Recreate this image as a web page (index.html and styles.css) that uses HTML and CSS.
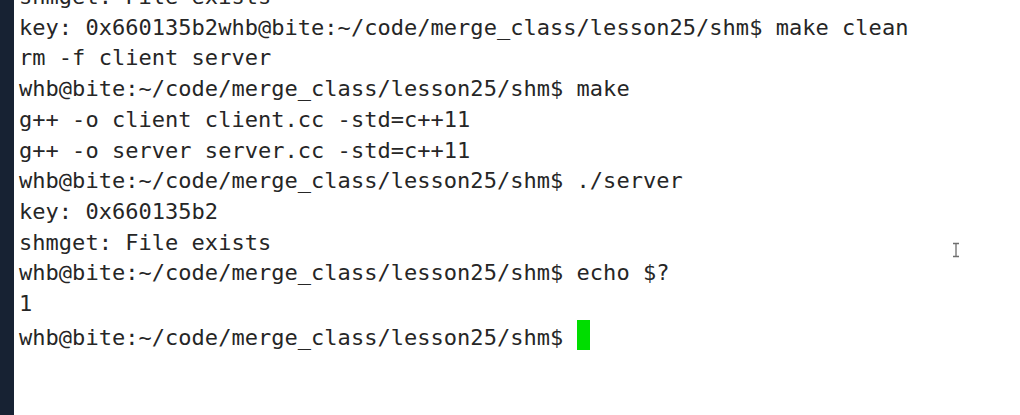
FILE: index.html
```html
<!DOCTYPE html>
<html>
<head>
<meta charset="utf-8">
<link rel="stylesheet" href="styles.css">
</head>
<body>
<div class="window">
  <div class="edge"></div>
  <div class="terminal">
<pre class="output">shmget: File exists
key: 0x660135b2whb@bite:~/code/merge_class/lesson25/shm$ make clean
rm -f client server
whb@bite:~/code/merge_class/lesson25/shm$ make
g++ -o client client.cc -std=c++11
g++ -o server server.cc -std=c++11
whb@bite:~/code/merge_class/lesson25/shm$ ./server
key: 0x660135b2
shmget: File exists
whb@bite:~/code/merge_class/lesson25/shm$ echo $?
1
whb@bite:~/code/merge_class/lesson25/shm$ <span class="cursor"></span></pre>
    <svg class="ibeam" width="10" height="16" viewBox="0 0 10 16">
      <path d="M2 1.5h6M5 1.5v13M2 14.5h6" stroke="#6e6e6e" stroke-width="1.3" fill="none"/>
    </svg>
  </div>
</div>
</body>
</html>
```
FILE: styles.css
```css
html, body {
  margin: 0;
  padding: 0;
  background: #ffffff;
  overflow: hidden;
}
.window {
  display: flex;
  width: 1020px;
  height: 415px;
}
.edge {
  width: 14px;
  flex: 0 0 14px;
  background: #172233;
}
.terminal {
  position: relative;
  flex: 1;
  background: #ffffff;
  padding-left: 5px;
  overflow: hidden;
}
.output {
  margin: -18px 0 0 0;
  font-family: "DejaVu Sans Mono", monospace;
  font-size: 22px;
  line-height: 30.7px;
  letter-spacing: 0.03px;
  color: #262626;
}
.cursor {
  display: inline-block;
  width: 13px;
  height: 30px;
  background: #00dd00;
  vertical-align: -5.5px;
}
.ibeam {
  position: absolute;
  left: 937px;
  top: 242px;
}
```
